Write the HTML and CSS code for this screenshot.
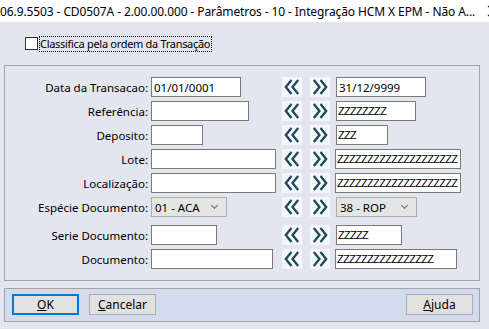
FILE: index.html
```html
<!DOCTYPE html>
<html lang="pt">
<head>
    <meta charset="UTF-8">
    <title>Parâmetros</title>
    <link rel="stylesheet" href="styles.css">
</head>
<body>
    <div class="titlebar">
        <span class="title">06.9.5503 - CD0507A - 2.00.00.000 - Parâmetros - 10 - Integração HCM X EPM - Não A...</span>
        <svg class="close" width="12" height="12" viewBox="0 0 12 12">
            <path d="M1 1 L11 11 M11 1 L1 11" stroke="#222" stroke-width="1.1"/>
        </svg>
    </div>

    <div class="check-row">
        <span class="checkbox"></span>
        <span class="check-label">Classifica pela ordem da Transação</span>
    </div>

    <div class="group">
        <div class="row">
            <label>Data da Transacao:</label>
            <div class="left"><input class="w90" value="01/01/0001"></div>
            <span class="arr"><svg viewBox="0 0 20 20"><path d="M9.5 3 L3.8 10 L9.5 17 M16.2 3 L10.5 10 L16.2 17"/></svg></span>
            <span class="arr arr2"><svg viewBox="0 0 20 20"><path d="M3.8 3 L9.5 10 L3.8 17 M10.5 3 L16.2 10 L10.5 17"/></svg></span>
            <input class="w90" value="31/12/9999">
        </div>
        <div class="row">
            <label>Referência:</label>
            <div class="left"><input class="w98"></div>
            <span class="arr"><svg viewBox="0 0 20 20"><path d="M9.5 3 L3.8 10 L9.5 17 M16.2 3 L10.5 10 L16.2 17"/></svg></span>
            <span class="arr arr2"><svg viewBox="0 0 20 20"><path d="M3.8 3 L9.5 10 L3.8 17 M10.5 3 L16.2 10 L10.5 17"/></svg></span>
            <input class="w80 z" value="ZZZZZZZZ">
        </div>
        <div class="row">
            <label>Deposito:</label>
            <div class="left"><input class="w52"></div>
            <span class="arr"><svg viewBox="0 0 20 20"><path d="M9.5 3 L3.8 10 L9.5 17 M16.2 3 L10.5 10 L16.2 17"/></svg></span>
            <span class="arr arr2"><svg viewBox="0 0 20 20"><path d="M3.8 3 L9.5 10 L3.8 17 M10.5 3 L16.2 10 L10.5 17"/></svg></span>
            <input class="w52 z" value="ZZZ">
        </div>
        <div class="row">
            <label>Lote:</label>
            <div class="left"><input class="w125"></div>
            <span class="arr"><svg viewBox="0 0 20 20"><path d="M9.5 3 L3.8 10 L9.5 17 M16.2 3 L10.5 10 L16.2 17"/></svg></span>
            <span class="arr arr2"><svg viewBox="0 0 20 20"><path d="M3.8 3 L9.5 10 L3.8 17 M10.5 3 L16.2 10 L10.5 17"/></svg></span>
            <input class="w126 z shift" value="ZZZZZZZZZZZZZZZZZZZZ">
        </div>
        <div class="row">
            <label>Localização:</label>
            <div class="left"><input class="w125"></div>
            <span class="arr"><svg viewBox="0 0 20 20"><path d="M9.5 3 L3.8 10 L9.5 17 M16.2 3 L10.5 10 L16.2 17"/></svg></span>
            <span class="arr arr2"><svg viewBox="0 0 20 20"><path d="M3.8 3 L9.5 10 L3.8 17 M10.5 3 L16.2 10 L10.5 17"/></svg></span>
            <input class="w126 z shift" value="ZZZZZZZZZZZZZZZZZZZZ">
        </div>
        <div class="row">
            <label>Espécie Documento:</label>
            <div class="left"><span class="select w76">01 - ACA<i></i></span></div>
            <span class="arr"><svg viewBox="0 0 20 20"><path d="M9.5 3 L3.8 10 L9.5 17 M16.2 3 L10.5 10 L16.2 17"/></svg></span>
            <span class="arr arr2"><svg viewBox="0 0 20 20"><path d="M3.8 3 L9.5 10 L3.8 17 M10.5 3 L16.2 10 L10.5 17"/></svg></span>
            <span class="select w81">38 - ROP<i></i></span>
        </div>
        <div class="row gap">
            <label>Serie Documento:</label>
            <div class="left"><input class="w66"></div>
            <span class="arr"><svg viewBox="0 0 20 20"><path d="M9.5 3 L3.8 10 L9.5 17 M16.2 3 L10.5 10 L16.2 17"/></svg></span>
            <span class="arr arr2"><svg viewBox="0 0 20 20"><path d="M3.8 3 L9.5 10 L3.8 17 M10.5 3 L16.2 10 L10.5 17"/></svg></span>
            <input class="w66 z" value="ZZZZZ">
        </div>
        <div class="row">
            <label>Documento:</label>
            <div class="left"><input class="w122"></div>
            <span class="arr"><svg viewBox="0 0 20 20"><path d="M9.5 3 L3.8 10 L9.5 17 M16.2 3 L10.5 10 L16.2 17"/></svg></span>
            <span class="arr arr2"><svg viewBox="0 0 20 20"><path d="M3.8 3 L9.5 10 L3.8 17 M10.5 3 L16.2 10 L10.5 17"/></svg></span>
            <input class="w122 z shift" value="ZZZZZZZZZZZZZZZZ">
        </div>
    </div>

    <div class="buttons">
        <button class="btn default"><u>O</u>K</button>
        <button class="btn"><u>C</u>ancelar</button>
        <span class="spacer"></span>
        <button class="btn"><u>A</u>juda</button>
    </div>
</body>
</html>
```

FILE: styles.css
```css
body {
    margin: 0;
    width: 489px;
    height: 329px;
    overflow: hidden;
    background: #e3e6ee;
    font-family: "Noto Sans", "Open Sans", sans-serif;
    font-size: 11.5px;
    color: #000;
}

.titlebar {
    height: 22px;
    background: #fff;
    display: flex;
    align-items: center;
    white-space: nowrap;
}

.title {
    font-size: 12px;
    letter-spacing: -0.1px;
}

.close {
    margin-left: 12px;
    flex: none;
}

.check-row {
    display: flex;
    align-items: center;
    margin: 15px 0 0 25px;
    height: 13px;
}

.checkbox {
    width: 13px;
    height: 13px;
    box-sizing: border-box;
    border: 1px solid #333;
    background: #fff;
}

.check-label {
    margin-left: 2px;
    outline: 1px dotted #000;
    line-height: 14px;
    font-size: 11px;
    letter-spacing: -0.3px;
    padding-right: 1px;
}

.group {
    margin: 15px 0 0 4px;
    width: 476px;
    height: 216px;
    box-sizing: border-box;
    border: 1px solid #a0a4ab;
    padding-top: 11px;
    display: flex;
    flex-direction: column;
}

.row {
    display: flex;
    align-items: center;
    height: 20px;
    margin-bottom: 4px;
    flex: none;
}

.row.gap {
    margin-top: 4px;
}

label {
    width: 143px;
    text-align: right;
    margin-right: 3px;
    flex: none;
}

.left {
    width: 131px;
    flex: none;
}

input {
    height: 20px;
    box-sizing: border-box;
    border: 1px solid #7a7a7a;
    background: #fff;
    font-family: "Noto Sans", "Open Sans", sans-serif;
    font-size: 11.5px;
    padding: 0 2px;
    margin: 0;
    outline: 0;
    display: block;
}

input.z {
    font-family: "Liberation Sans", sans-serif;
    font-size: 11px;
    letter-spacing: -0.7px;
    padding: 0 1px;
}

input.shift {
    margin-left: -1px;
}

.w52 { width: 52px; }
.w66 { width: 66px; }
.w76 { width: 76px; }
.w80 { width: 80px; }
.w81 { width: 81px; }
.w90 { width: 90px; }
.w98 { width: 98px; }
.w122 { width: 122px; }
.w125 { width: 125px; }
.w126 { width: 126px; }

.arr {
    width: 20px;
    height: 20px;
    background: #f4f6f9;
    flex: none;
    margin-right: 8px;
}

.arr2 {
    margin-right: 6px;
}

.arr svg {
    width: 20px;
    height: 20px;
    display: block;
}

.arr path {
    fill: none;
    stroke: #1d4a5a;
    stroke-width: 2.3;
}

.select {
    height: 20px;
    box-sizing: border-box;
    border: 1px solid #adadad;
    background: #e5e5e5;
    display: flex;
    align-items: center;
    padding-left: 3px;
    position: relative;
}

.select i {
    position: absolute;
    right: 9px;
    top: 5px;
    width: 4px;
    height: 4px;
    border-right: 1px solid #666;
    border-bottom: 1px solid #666;
    transform: rotate(45deg);
}

.buttons {
    margin: 7px 0 0 4px;
    width: 476px;
    height: 34px;
    box-sizing: border-box;
    border: 1px solid #a0a4ab;
    background: #d3dcec;
    display: flex;
    align-items: flex-start;
    padding: 5px 6px 0 7px;
}

.spacer {
    flex: 1;
}

.btn {
    width: 67px;
    height: 21px;
    box-sizing: border-box;
    border: 1px solid #adadad;
    background: #e1e1e1;
    font-family: "Noto Sans", "Open Sans", sans-serif;
    font-size: 12px;
    padding: 0;
    margin-right: 10px;
    color: #000;
}

.btn:last-child {
    margin-right: 0;
}

.btn.default {
    border: 2px solid #0078d7;
}
```
